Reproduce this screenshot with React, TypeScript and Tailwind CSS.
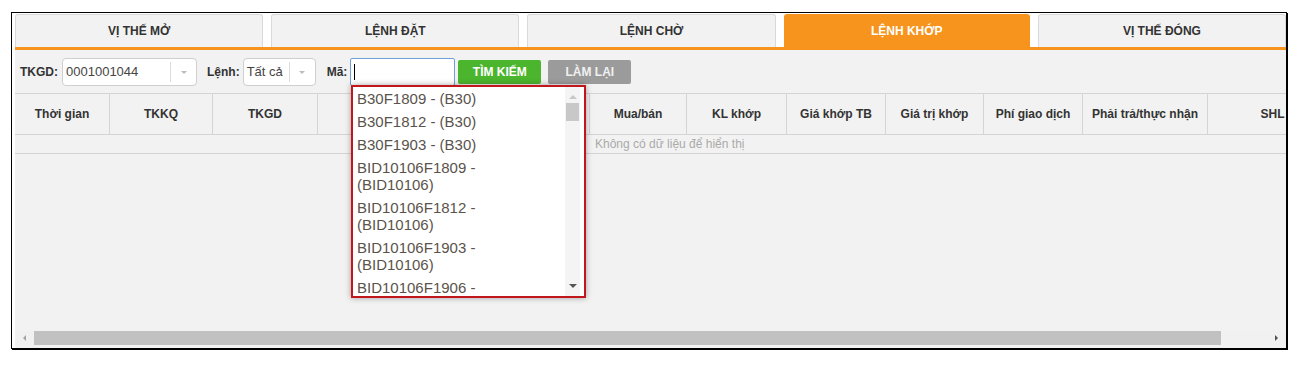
import React from "react";

const tabs = ["VỊ THẾ MỞ", "LỆNH ĐẶT", "LỆNH CHỜ", "LỆNH KHỚP", "VỊ THẾ ĐÓNG"];

const columns: { label: string; w: string }[] = [
  { label: "Thời gian", w: "w-[95px]" },
  { label: "TKKQ", w: "w-[103px]" },
  { label: "TKGD", w: "w-[105px]" },
  { label: "Mã HĐ", w: "w-[132px]" },
  { label: "Loại", w: "w-[140px]" },
  { label: "Mua/bán", w: "w-[97px]" },
  { label: "KL khớp", w: "w-[100px]" },
  { label: "Giá khớp TB", w: "w-[99px]" },
  { label: "Giá trị khớp", w: "w-[98px]" },
  { label: "Phí giao dịch", w: "w-[99px]" },
  { label: "Phải trả/thực nhận", w: "w-[125px]" },
  { label: "SHL", w: "w-[130px]" },
];

const options: string[][] = [
  ["B30F1809 - (B30)"],
  ["B30F1812 - (B30)"],
  ["B30F1903 - (B30)"],
  ["BID10106F1809 -", "(BID10106)"],
  ["BID10106F1812 -", "(BID10106)"],
  ["BID10106F1903 -", "(BID10106)"],
  ["BID10106F1906 -", "(BID10106)"],
];

function Select({ value, w, split }: { value: string; w: string; split: string }) {
  return (
    <div className={`flex h-[28px] ${w} items-center rounded-[4px] border border-[#cfcfcf] bg-white`}>
      <span className="flex-1 pl-[3px] text-[13px] text-[#444]">{value}</span>
      <div className={`flex h-[20px] ${split} items-center justify-center border-l border-[#dcdcdc]`}>
        <span className="h-0 w-0 border-x-[3px] border-t-[3px] border-x-transparent border-t-[#bbb]" />
      </div>
    </div>
  );
}

export default function App() {
  return (
    <div className="relative h-[366px] w-[1310px] overflow-hidden bg-white pl-[11px] pt-[12px] font-[Liberation_Sans,Arial,sans-serif]">
      <div className="flex h-[337px] w-[1276px] flex-col border border-black bg-white pl-[3px] pt-[1px] shadow-[1px_1px_0_#000]">
        {/* tabs */}
        <div className="flex h-[33px] gap-[8px]">
          {tabs.map((t, i) =>
            i === 3 ? (
              <div key={t} className="flex flex-1 items-center justify-center rounded-t-[3px] bg-[#f7941d] text-[12px] font-bold text-white">
                {t}
              </div>
            ) : (
              <div key={t} className="flex flex-1 items-center justify-center rounded-t-[3px] border border-b-0 border-[#d9d9d9] bg-[#f2f2f2] text-[12px] font-bold text-[#333]">
                {t}
              </div>
            )
          )}
        </div>
        <div className="h-[3px] bg-[#f7941d]" />

        <div className="flex flex-1 flex-col bg-[#f2f2f2]">
          {/* toolbar */}
          <div className="flex h-[43px] items-center pl-[5px] pt-[1px]">
            <span className="mr-[4px] text-[12px] font-bold text-[#333]">TKGD:</span>
            <Select value="0001001044" w="w-[135px]" split="w-[26px]" />
            <span className="ml-[10px] mr-[3px] text-[12px] font-bold text-[#333]">Lệnh:</span>
            <Select value="Tất cả" w="w-[73px]" split="w-[26px]" />
            <span className="ml-[11px] mr-[3px] text-[12px] font-bold text-[#333]">Mã:</span>
            <div className="flex h-[28px] w-[105px] items-center rounded-[2px] border border-[#6fa0d8] bg-white pl-[3px]">
              <span className="h-[16px] w-px bg-black" />
            </div>
            <button className="ml-[3px] h-[24px] w-[83px] rounded-[2px] bg-[#4cb52e] text-[12px] font-bold text-white">TÌM KIẾM</button>
            <button className="ml-[7px] h-[24px] w-[83px] rounded-[2px] bg-[#9b9b9b] text-[12px] font-bold text-[#f0f0f0]">LÀM LẠI</button>
          </div>

          {/* table */}
          <div className="overflow-hidden">
            <div className="flex h-[42px] w-[1400px] border-y border-[#d4d4d4]">
              {columns.map((c) => (
                <div key={c.label} className={`flex ${c.w} shrink-0 items-center justify-center border-r border-[#d4d4d4] text-[12px] font-bold text-[#333]`}>
                  {c.label}
                </div>
              ))}
            </div>
            <div className="flex h-[19px] items-center border-b border-[#d4d4d4] pl-[580px] text-[12px] text-[#aaa]">
              Không có dữ liệu để hiển thị
            </div>
          </div>

          <div className="flex-1" />

          {/* horizontal scrollbar */}
          <div className="mb-[3px] flex h-[14px] items-center bg-[#f1f1f1]">
            <div className="flex w-[19px] justify-center">
              <span className="h-0 w-0 border-y-[3px] border-r-[3px] border-y-transparent border-r-[#a3a3a3]" />
            </div>
            <div className="h-[14px] w-[1187px] bg-[#c1c1c1]" />
            <div className="flex-1" />
            <div className="flex w-[19px] justify-center">
              <span className="h-0 w-0 border-y-[3px] border-l-[3px] border-y-transparent border-l-[#505050]" />
            </div>
          </div>
        </div>
      </div>

      {/* autocomplete dropdown */}
      <div className="absolute left-[351px] top-[85px] flex h-[213px] w-[235px] border-2 border-[#c0161c] bg-white shadow-[0_0_6px_rgba(0,0,0,0.35)]">
        <div className="flex-1 overflow-hidden pl-[4px]">
          {options.map((o) => (
            <div key={o[0]} className="py-[3px] text-[15px] leading-[17px] text-[#5a534c]">
              {o.map((l) => (
                <div key={l}>{l}</div>
              ))}
            </div>
          ))}
        </div>
        <div className="mr-[4px] flex w-[15px] flex-col items-center bg-[#f4f4f4]">
          <span className="mt-[8px] h-0 w-0 border-x-[4px] border-b-[4px] border-x-transparent border-b-[#c8c8c8]" />
          <div className="mt-[4px] h-[18px] w-[13px] bg-[#c8c8c8]" />
          <div className="flex-1" />
          <span className="mb-[8px] h-0 w-0 border-x-[4px] border-t-[4px] border-x-transparent border-t-[#555]" />
        </div>
      </div>
    </div>
  );
}
